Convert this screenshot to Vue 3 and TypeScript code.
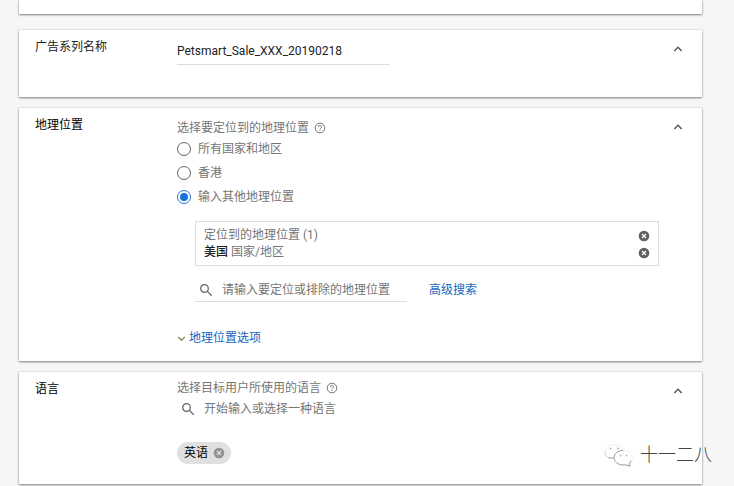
<script setup lang="ts">
import { ref } from 'vue'

interface LocationOption {
  value: string
  label: string
}

const campaignName = ref('Petsmart_Sale_XXX_20190218')
const locationOptions: LocationOption[] = [
  { value: 'all', label: '所有国家和地区' },
  { value: 'hk', label: '香港' },
  { value: 'other', label: '输入其他地理位置' },
]
const selectedLocation = ref('other')
const locationQuery = ref('')
const languageQuery = ref('')
const targets = ref([{ name: '美国', kind: '国家/地区' }])
const languages = ref(['英语'])
const open = ref({ name: true, location: true, language: true })

function removeTarget(index: number) {
  targets.value.splice(index, 1)
}
function removeLanguage(index: number) {
  languages.value.splice(index, 1)
}
</script>

<template>
  <main class="page">
    <section class="card card-previous"></section>

    <section class="card">
      <h2 class="card-title"><label for="campaign-name">广告系列名称</label></h2>
      <div class="card-body name-body">
        <input v-show="open.name" id="campaign-name" v-model="campaignName" class="name-input" type="text" />
      </div>
      <button class="collapse" type="button" aria-label="收起" @click="open.name = !open.name">
        <svg viewBox="0 0 10 10"><path d="M1.3 7 5 3.3 8.700 7" /></svg>
      </button>
    </section>

    <section class="card">
      <h2 class="card-title strong">地理位置</h2>
      <div class="card-body location-body">
        <div class="hint">
          <span id="location-hint">选择要定位到的地理位置</span>
          <svg class="help" viewBox="0 0 12 12">
            <circle cx="6" cy="6" r="4.800" />
            <path d="M4.500 4.900a1.500 1.500 0 1 1 2.300 1.200c-.5.350-.8.600-.8 1.100M6 8.100v.9" />
          </svg>
        </div>
        <div v-show="open.location">
          <div class="radios" role="radiogroup" aria-labelledby="location-hint">
            <label v-for="option in locationOptions" :key="option.value" class="radio">
              <input v-model="selectedLocation" type="radio" name="location" :value="option.value" />
              <span>{{ option.label }}</span>
            </label>
          </div>
          <div class="nested">
            <div class="targets">
              <div class="target-row">
                <span>定位到的地理位置 ({{ targets.length }})</span>
                <button class="remove" type="button" aria-label="全部移除" @click="targets = []">
                  <svg viewBox="0 0 12 12"><circle cx="6" cy="6" r="5.300" /><path d="m4 4 4 4M8 4 4 8" /></svg>
                </button>
              </div>
              <div v-for="(target, index) in targets" :key="target.name" class="target-row">
                <span><b>{{ target.name }}</b> {{ target.kind }}</span>
                <button class="remove" type="button" aria-label="移除" @click="removeTarget(index)">
                  <svg viewBox="0 0 12 12"><circle cx="6" cy="6" r="5.300" /><path d="m4 4 4 4M8 4 4 8" /></svg>
                </button>
              </div>
            </div>
            <div class="search-line">
              <div class="search underlined">
                <svg class="magnifier" viewBox="0 0 14 14"><circle cx="5.500" cy="5.500" r="3.800" /><path d="m8.400 8.400 4.300 4.300" /></svg>
                <input v-model="locationQuery" type="text" aria-label="地理位置" placeholder="请输入要定位或排除的地理位置" />
              </div>
              <a class="link" href="#">高级搜索</a>
            </div>
          </div>
          <a class="link more" href="#">
            <svg viewBox="0 0 10 10"><path d="M1.300 3.300 5 7l3.700-3.700" /></svg>
            <span>地理位置选项</span>
          </a>
        </div>
      </div>
      <button class="collapse" type="button" aria-label="收起" @click="open.location = !open.location">
        <svg viewBox="0 0 10 10"><path d="M1.300 7 5 3.300 8.700 7" /></svg>
      </button>
    </section>

    <section class="card">
      <h2 class="card-title strong">语言</h2>
      <div class="card-body language-body">
        <div class="hint">
          <span>选择目标用户所使用的语言</span>
          <svg class="help" viewBox="0 0 12 12">
            <circle cx="6" cy="6" r="4.800" />
            <path d="M4.500 4.900a1.500 1.500 0 1 1 2.300 1.200c-.5.350-.8.600-.8 1.100M6 8.100v.9" />
          </svg>
        </div>
        <div v-show="open.language">
          <div class="search">
            <svg class="magnifier" viewBox="0 0 14 14"><circle cx="5.500" cy="5.500" r="3.800" /><path d="m8.400 8.400 4.300 4.300" /></svg>
            <input v-model="languageQuery" type="text" aria-label="语言" placeholder="开始输入或选择一种语言" />
          </div>
          <div class="chips">
            <span v-for="(language, index) in languages" :key="language" class="chip">
              {{ language }}
              <button class="remove" type="button" aria-label="移除" @click="removeLanguage(index)">
                <svg viewBox="0 0 12 12"><circle cx="6" cy="6" r="5.300" /><path d="m4 4 4 4M8 4 4 8" /></svg>
              </button>
            </span>
          </div>
        </div>
      </div>
      <button class="collapse" type="button" aria-label="收起" @click="open.language = !open.language">
        <svg viewBox="0 0 10 10"><path d="M1.300 7 5 3.300 8.700 7" /></svg>
      </button>
      <div class="watermark">
        <svg viewBox="0 0 30 24">
          <path d="M1 9C2 4 6 1.500 11 1.500c4 0 7.500 2 8.500 5.500" class="faint" />
          <path d="M1 9c0 3 1.500 4.500 4 6" class="soft" />
          <path d="M4.500 15h5" />
          <path d="M19 7.500c-5 0-9 3-9 7s4 7.500 9 7.500h4l3 1.200-.3-2.700 1.300-3" />
          <path d="M19 7.500c5 0 9 3 9.300 7.500 0 1-.3 2-1.300 3" class="faint" />
          <g class="eyes">
            <circle cx="6.500" cy="5.500" r="1.100" /><circle cx="14" cy="5.500" r="1.100" />
            <circle cx="16.500" cy="12.500" r="1" /><circle cx="22.500" cy="12.500" r="1" />
          </g>
        </svg>
        <span>十一二八</span>
      </div>
    </section>
  </main>
</template>

<style>
body {
  margin: 0;
  background: #f6f6f6;
}
</style>

<style scoped>
.page {
  display: flex;
  flex-direction: column;
  gap: 11px;
  padding: 0 32px 2px 19px;
  color: #212121;
  font: 12px/18px Roboto, "Noto Sans CJK SC", sans-serif;
}
.card {
  position: relative;
  display: grid;
  grid-template-columns: 142px 1fr 24px;
  padding: 0 12px 0 16px;
  background: #fff;
  box-shadow: 0 1px 2px rgba(0, 0, 0, 0.45), 0 0 2px rgba(0, 0, 0, 0.15);
}
.card-previous {
  height: 14px;
  margin-bottom: 5px;
}
.card-title {
  margin: 0;
  padding-top: 8px;
  font: inherit;
}
.card-title.strong {
  color: #000;
}
.name-body {
  padding: 7px 0 32px;
}
.location-body {
  padding: 11px 0 15px;
}
.language-body {
  padding: 7px 0 20px;
}
input {
  box-sizing: border-box;
  min-width: 0;
  margin: 0;
  padding: 0;
  border: 0;
  outline: 0;
  background: none;
  color: inherit;
  font: inherit;
}
input::placeholder {
  color: #757575;
  opacity: 1;
}
button {
  padding: 0;
  border: 0;
  background: none;
  cursor: pointer;
}
svg {
  display: block;
  flex: none;
  fill: none;
  stroke: currentColor;
}
.name-input {
  display: block;
  width: 213px;
  height: 28px;
  border-bottom: 1px solid #dcdcdc;
}
.collapse {
  display: grid;
  place-items: center;
  width: 24px;
  height: 24px;
  margin-top: 7px;
  color: #555;
}
.collapse svg {
  width: 10px;
  height: 10px;
  stroke-width: 1.4;
}
.hint {
  display: flex;
  align-items: center;
  gap: 5px;
  color: #757575;
}
.help {
  width: 12px;
  height: 12px;
}
.radio {
  display: flex;
  align-items: center;
  gap: 7px;
  height: 24px;
  color: #757575;
}
.radio input {
  display: grid;
  place-items: center;
  width: 14px;
  height: 14px;
  border: 1px solid #616161;
  border-radius: 50%;
  appearance: none;
}
.radio input:checked {
  border-color: #1a73d9;
}
.radio input:checked::before {
  width: 8px;
  height: 8px;
  border-radius: 50%;
  background: #1a73d9;
  content: "";
}
.nested {
  padding: 12px 7px 0 18px;
}
.targets {
  padding: 5px 8px 4px;
  border: 1px solid #dedede;
  color: #757575;
  line-height: 17px;
}
.target-row {
  display: flex;
  align-items: center;
  justify-content: space-between;
}
.target-row b {
  color: #212121;
  font-weight: 500;
}
.remove {
  color: #616161;
}
.remove svg {
  width: 12px;
  height: 12px;
}
.remove circle {
  fill: currentColor;
  stroke: none;
}
.remove path {
  stroke: #fff;
  stroke-width: 1.2;
}
.search-line {
  display: flex;
  align-items: center;
  gap: 22px;
  padding-top: 12px;
}
.search {
  display: flex;
  align-items: center;
  gap: 9px;
  box-sizing: border-box;
  width: 212px;
  height: 24px;
  padding-left: 4px;
}
.search input {
  flex: 1;
}
.underlined {
  border-bottom: 1px solid #dcdcdc;
}
.magnifier {
  width: 14px;
  height: 14px;
  color: #666;
  stroke-width: 1.3;
}
.link {
  color: #1565c0;
  text-decoration: none;
}
.more {
  display: flex;
  align-items: center;
  gap: 3px;
  width: max-content;
  margin-top: 28px;
  line-height: 16px;
}
.more svg {
  width: 9px;
  height: 9px;
  color: #888b62;
  stroke-width: 1.5;
}
.chips {
  display: flex;
  gap: 8px;
  padding-top: 21px;
}
.chip {
  display: flex;
  align-items: center;
  gap: 5px;
  height: 22px;
  padding: 0 6px 0 7px;
  border-radius: 11px;
  background: #e0e0e0;
  color: #000;
}
.chip .remove {
  color: #929292;
}
.chip .remove path {
  stroke: #e0e0e0;
}
.watermark {
  position: absolute;
  right: -10px;
  bottom: 16px;
  display: flex;
  align-items: center;
  gap: 6px;
  color: #444;
  font-weight: 300;
  font-size: 18px;
  line-height: 26px;
  pointer-events: none;
}
.watermark svg {
  width: 30px;
  height: 24px;
  color: #999;
}
.watermark .faint {
  stroke: #eee;
}
.watermark .soft {
  stroke: #ccc;
}
.watermark .eyes {
  fill: #bbb;
  stroke: none;
}
</style>
